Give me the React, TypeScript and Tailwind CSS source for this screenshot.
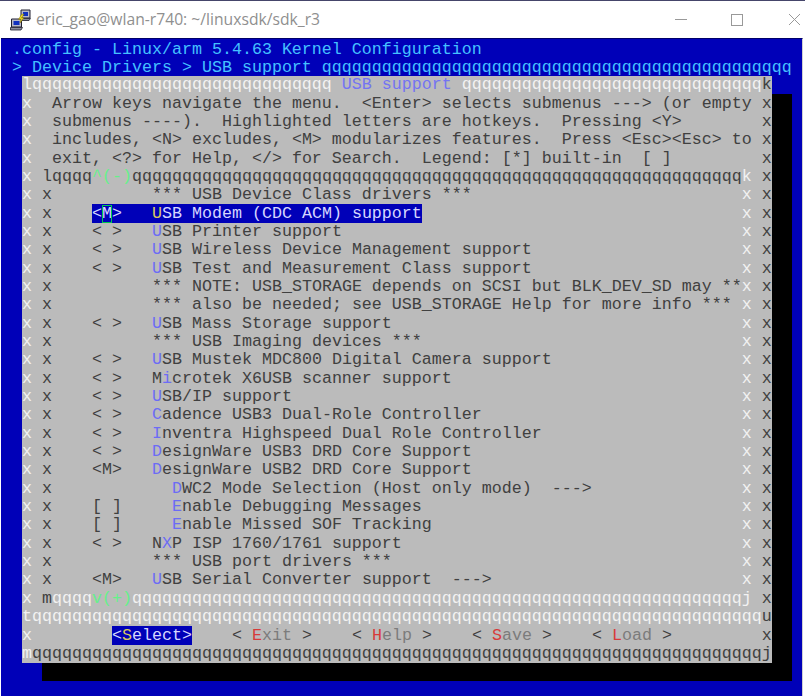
import type { ReactNode } from "react";

const rowClass = "h-[18.35px] leading-[18.35px] whitespace-pre";

type MenuEntry = {
    mark?: string;
    pad?: number;
    before?: string;
    hot?: string;
    text: string;
};

const help: string[] = [
    "Arrow keys navigate the menu.  <Enter> selects submenus ---> (or empty",
    "submenus ----).  Highlighted letters are hotkeys.  Pressing <Y>",
    "includes, <N> excludes, <M> modularizes features.  Press <Esc><Esc> to",
    "exit, <?> for Help, </> for Search.  Legend: [*] built-in  [ ]",
];

const entriesTop: MenuEntry[] = [
    { mark: "< >", hot: "U", text: "SB Printer support" },
    { mark: "< >", hot: "U", text: "SB Wireless Device Management support" },
    { mark: "< >", hot: "U", text: "SB Test and Measurement Class support" },
    { text: "*** NOTE: USB_STORAGE depends on SCSI but BLK_DEV_SD may **" },
    { text: "*** also be needed; see USB_STORAGE Help for more info ***" },
    { mark: "< >", hot: "U", text: "SB Mass Storage support" },
    { text: "*** USB Imaging devices ***" },
    { mark: "< >", hot: "U", text: "SB Mustek MDC800 Digital Camera support" },
    { mark: "< >", before: "M", hot: "i", text: "crotek X6USB scanner support" },
    { mark: "< >", hot: "U", text: "SB/IP support" },
    { mark: "< >", hot: "C", text: "adence USB3 Dual-Role Controller" },
    { mark: "< >", hot: "I", text: "nventra Highspeed Dual Role Controller" },
    { mark: "< >", hot: "D", text: "esignWare USB3 DRD Core Support" },
    { mark: "<M>", hot: "D", text: "esignWare USB2 DRD Core Support" },
    { pad: 2, hot: "D", text: "WC2 Mode Selection (Host only mode)  --->" },
    { mark: "[ ]", pad: 2, hot: "E", text: "nable Debugging Messages" },
    { mark: "[ ]", pad: 2, hot: "E", text: "nable Missed SOF Tracking" },
    { mark: "< >", before: "N", hot: "X", text: "P ISP 1760/1761 support" },
    { text: "*** USB port drivers ***" },
    { mark: "<M>", hot: "U", text: "SB Serial Converter support  --->" },
];

function Light({ children }: { children: ReactNode }) {
    return <span className="text-[#f2f2f2]">{children}</span>;
}

function Hot({ children }: { children: ReactNode }) {
    return <span className="text-[#6c6cf5]">{children}</span>;
}

// inner list row: col 1 and col 73 borders are light, col 3 and col 75 are dark
function ListRow({ children, used }: { children: ReactNode; used: number }) {
    return (
        <div className={rowClass}>
            <Light>x</Light> x{children}
            {" ".repeat(73 - 4 - used)}
            <Light>x</Light> x
        </div>
    );
}

function MenuRow({ entry }: { entry: MenuEntry }) {
    const mark = entry.mark ?? "   ";
    const indent = " ".repeat(entry.pad ?? 0);
    const before = entry.before ?? "";
    const hot = entry.hot ?? "";
    const head = `    ${mark}   ${indent}${before}`;
    return (
        <ListRow used={head.length + hot.length + entry.text.length}>
            {head}
            <Hot>{hot}</Hot>
            {entry.text}
        </ListRow>
    );
}

function Button({ hot, rest }: { hot: string; rest: string }) {
    return (
        <span>
            {"< "}
            <span className="text-[#d83a3a]">{hot}</span>
            <span className="text-[#7c7c7c]">{rest}</span>
            {" >"}
        </span>
    );
}

function PuttyIcon() {
    return (
        <svg width="22" height="22" viewBox="0 0 22 22" className="shrink-0">
            <path d="M11 1h9v8h-9z" fill="#b8b8c8" stroke="#202030" />
            <path d="M13 3h5v4h-5z" fill="#1030c0" />
            <path d="M9.5 9.5h11l-1.500 2h-10z" fill="#8c8c9c" stroke="#202030" strokeWidth="0.8" />
            <path d="M1.500 10h10v8h-10z" fill="#b8b8c8" stroke="#202030" />
            <path d="M3.500 12h6v4h-6z" fill="#1030c0" />
            <path d="M0.500 18.500h12l-1.500 2.500h-10.500z" fill="#8c8c9c" stroke="#202030" strokeWidth="0.8" />
            <path d="M14 5l-2.500 4 2.500-.5-4 5.500 1-4-2.500.5 3-5z" fill="#f4e020" stroke="#806c00" strokeWidth="0.5" />
        </svg>
    );
}

function App() {
    return (
        <div className="w-[805px] h-[696px] bg-white flex flex-col overflow-hidden">
            <header className="h-[38px] shrink-0 border-t border-t-[#45456a] flex items-center bg-white">
                <div className="ml-[10px] mr-[4px] flex items-center">
                    <PuttyIcon />
                </div>
                <span className="font-['Open_Sans',sans-serif] text-[15.7px] text-[#8f8f8f] whitespace-pre">
                    eric_gao@wlan-r740: ~/linuxsdk/sdk_r3
                </span>
                <div className="ml-auto mr-[4px] flex items-center gap-[44px]">
                    <span className="block w-3 h-px bg-[#999999]" />
                    <span className="block w-3 h-3 border border-[#999999]" />
                    <svg width="13" height="13" viewBox="0 0 13 13" className="ml-px">
                        <path d="M1 1l11 11M12 1L1 12" stroke="#999999" strokeWidth="1" fill="none" />
                    </svg>
                </div>
            </header>
            <main className="flex-1 ml-px w-[802px] bg-[#0000b8] border-t border-t-[#00006a] border-r border-r-[#d0d0d0] pt-[1.5px] pl-[11px] font-['Liberation_Mono',monospace] text-[16.67px] text-[#404040]">
                <div className={`${rowClass} text-[#45c0ff]`}>.config - Linux/arm 5.4.63 Kernel Configuration</div>
                <div className={`${rowClass} text-[#45c0ff]`}>
                    {"> Device Drivers > USB support " + "q".repeat(47)}
                </div>
                <section className="ml-[10px] -mt-px w-[750px] bg-[#bbbbbb] shadow-[20px_18px_0_#000000]">
                    <div className={rowClass}>
                        <Light>{"l" + "q".repeat(30)}</Light>
                        <span className="text-[#7474f2]"> USB support </span>
                        <Light>{"q".repeat(30)}</Light>k
                    </div>
                    {help.map((line) => (
                        <div key={line} className={rowClass}>
                            <Light>x</Light>
                            {"  " + line.padEnd(71)}x
                        </div>
                    ))}
                    <div className={rowClass}>
                        <Light>x</Light>
                        {" lqqqq"}
                        <span className="text-[#66f08a]">^(-)</span>
                        {"q".repeat(61)}
                        <Light>k</Light> x
                    </div>
                    <ListRow used={42}>{"          *** USB Device Class drivers ***"}</ListRow>
                    <ListRow used={37}>
                        {"    "}
                        <span className="bg-[#0000b8] text-[#d6d6ff]">
                            {"<"}
                            <span className="inline-block outline outline-1 -outline-offset-1 outline-[#00c850]">M</span>
                            {">   "}
                            <span className="text-[#d8c860]">U</span>
                            SB Modem (CDC ACM) support
                        </span>
                    </ListRow>
                    {entriesTop.map((entry) => (
                        <MenuRow key={entry.text} entry={entry} />
                    ))}
                    <div className={rowClass}>
                        <Light>x</Light> m
                        <Light>qqqq</Light>
                        <span className="text-[#66f08a]">v(+)</span>
                        <Light>{"q".repeat(61)}j</Light> x
                    </div>
                    <div className={rowClass}>
                        <Light>{"t" + "q".repeat(73)}</Light>u
                    </div>
                    <div className={rowClass}>
                        <Light>x</Light>
                        {" ".repeat(8)}
                        <span className="bg-[#0000b8] text-[#d6d6ff]">
                            {"<"}
                            <span className="text-[#d8c860]">S</span>
                            {"elect>"}
                        </span>
                        {"    "}
                        <Button hot="E" rest="xit" />
                        {"    "}
                        <Button hot="H" rest="elp" />
                        {"    "}
                        <Button hot="S" rest="ave" />
                        {"    "}
                        <Button hot="L" rest="oad" />
                        {" ".repeat(9)}x
                    </div>
                    <div className={rowClass}>
                        <Light>m</Light>
                        {"q".repeat(73)}j
                    </div>
                </section>
            </main>
        </div>
    );
}

export default App;
